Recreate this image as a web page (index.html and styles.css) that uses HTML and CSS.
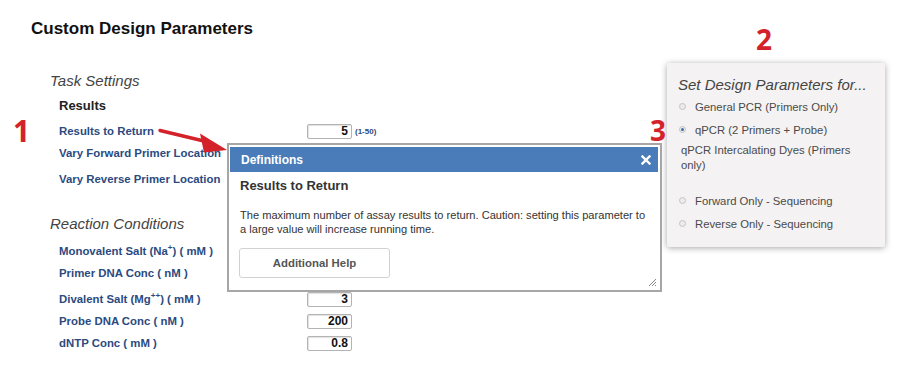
FILE: index.html
```html
<!DOCTYPE html>
<html>
<head>
<meta charset="utf-8">
<title>Custom Design Parameters</title>
<link rel="stylesheet" href="styles.css">
</head>
<body>
<div class="page">
  <div class="main">
    <h1>Custom Design Parameters</h1>

    <h2 class="sect">Task Settings</h2>
    <h3 class="sub">Results</h3>
    <div class="rows">
      <div class="row">
        <label>Results to Return</label>
        <span class="field"><input class="num" type="text" value="5"><span class="range">(1-50)</span></span>
      </div>
      <div class="row">
        <label>Vary Forward Primer Location</label>
        <span class="field"><input class="num" type="text" value=""></span>
      </div>
      <div class="row sp">
        <label>Vary Reverse Primer Location</label>
        <span class="field"><input class="num" type="text" value=""></span>
      </div>
    </div>

    <h2 class="sect sect2">Reaction Conditions</h2>
    <div class="rows rows2">
      <div class="row">
        <label>Monovalent Salt (Na<sup>+</sup>) ( mM )</label>
        <span class="field"><input class="num" type="text" value="50"></span>
      </div>
      <div class="row">
        <label>Primer DNA Conc ( nM )</label>
        <span class="field"><input class="num" type="text" value="500"></span>
      </div>
      <div class="row sp">
        <label>Divalent Salt (Mg<sup>++</sup>) ( mM )</label>
        <span class="field"><input class="num" type="text" value="3"></span>
      </div>
      <div class="row">
        <label>Probe DNA Conc ( nM )</label>
        <span class="field"><input class="num" type="text" value="200"></span>
      </div>
      <div class="row">
        <label>dNTP Conc ( mM )</label>
        <span class="field"><input class="num" type="text" value="0.8"></span>
      </div>
    </div>
  </div>

  <!-- design type chooser -->
  <div class="panel">
    <div class="panel-title">Set Design Parameters for...</div>
    <div class="opt"><span class="radio"></span>General PCR (Primers Only)</div>
    <div class="opt"><span class="radio on"></span>qPCR (2 Primers + Probe)</div>
    <div class="opt-wrap">qPCR Intercalating Dyes (Primers<br>only)</div>
    <div class="opt opt-gap"><span class="radio"></span>Forward Only - Sequencing</div>
    <div class="opt"><span class="radio"></span>Reverse Only - Sequencing</div>
  </div>
</div>

<!-- definitions popup -->
<div class="dialog">
  <div class="dlg-head">
    <span>Definitions</span>
    <svg class="dlg-close" width="10" height="10" viewBox="0 0 10 10"><path d="M1.5 1.5 L8.5 8.5 M8.5 1.5 L1.5 8.5" stroke="#fff" stroke-width="2.4" stroke-linecap="square"/></svg>
  </div>
  <div class="dlg-body">
    <div class="dlg-title">Results to Return</div>
    <p class="dlg-text">The maximum number of assay results to return. Caution: setting this parameter to<br>a large value will increase running time.</p>
    <button class="help-btn" type="button">Additional Help</button>
  </div>
  <svg class="grip" width="10" height="10" viewBox="0 0 10 10"><path d="M9 2 L2 9 M9 5 L5 9 M9 8 L8 9" stroke="#888" stroke-width="1"/></svg>
</div>

<!-- annotations -->
<span class="mark m1">1</span>
<span class="mark m2">2</span>
<span class="mark m3">3</span>
<svg class="arrow" width="915" height="369" viewBox="0 0 915 369">
  <path d="M160 130.5 L208 142" stroke="#d3222a" stroke-width="3.4" stroke-linecap="round"/>
  <polygon points="227,150 200,133.5 204,152.5" fill="#d3222a"/>
</svg>
</body>
</html>
```
FILE: styles.css
```css
body {
  margin: 0;
  background: #fff;
  color: #222;
  font-family: "Liberation Sans", Arial, sans-serif;
}

.page {
  display: flex;
  padding: 19px 0 0 31px;
}
.main {
  width: 636px;
}

h1 {
  margin: 0;
  font-size: 17px;
  line-height: 20px;
  color: #111;
}

.sect {
  margin: 33px 0 0 19px;
  font-size: 15px;
  line-height: 18px;
  font-style: italic;
  font-weight: normal;
  color: #444;
}
.sect2 {
  margin-top: 25px;
}
.sub {
  margin: 8px 0 0 28px;
  font-size: 13px;
  line-height: 16px;
  color: #222;
}

.rows {
  margin: 6px 0 0 28px;
}
.rows2 {
  margin-top: 7px;
}
.row {
  display: grid;
  grid-template-columns: 248px auto;
  align-items: center;
  height: 22px;
}
.row.sp {
  margin-top: 4px;
}
.row label {
  font-size: 11.4px;
  font-weight: bold;
  color: #2b4a80;
  white-space: nowrap;
}
.row sup {
  font-size: 8px;
  line-height: 0;
}
.field {
  display: flex;
  align-items: center;
  gap: 3px;
}
.num {
  width: 45px;
  height: 15px;
  box-sizing: border-box;
  margin: 0;
  padding: 0 3px;
  border: 1px solid #b3b3b3;
  border-radius: 2px;
  box-shadow: inset 1px 1px 1px rgba(0,0,0,.12);
  text-align: right;
  font: bold 12px "Liberation Sans", Arial, sans-serif;
  color: #111;
}
.range {
  font-size: 8px;
  font-weight: bold;
  color: #2b4a80;
}

/* right panel */
.panel {
  margin-top: 44px;
  width: 218px;
  height: 184px;
  box-sizing: border-box;
  padding: 12.5px 0 0 11px;
  background: #f4f2f2;
  border-radius: 2px;
  box-shadow: 0 1px 6px rgba(0,0,0,.35);
  color: #4a4a4a;
  font-size: 11.3px;
}
.panel-title {
  font-size: 15px;
  line-height: 18px;
  font-style: italic;
  color: #444;
  margin-bottom: 1.5px;
}
.opt {
  display: flex;
  align-items: center;
  gap: 9px;
  height: 23px;
  margin-left: 1px;
}
.opt-gap {
  margin-top: 16px;
}
.opt-wrap {
  margin: 2px 0 0 3px;
  line-height: 15px;
}
.radio {
  width: 7px;
  height: 7px;
  box-sizing: border-box;
  border: 1px solid #c4c4c4;
  border-radius: 50%;
  background: #ececec;
  position: relative;
}
.radio.on::after {
  content: "";
  position: absolute;
  left: 1px;
  top: 1px;
  width: 3px;
  height: 3px;
  border-radius: 50%;
  background: #3d6fa8;
}

/* popup */
.dialog {
  position: absolute;
  left: 227px;
  top: 143px;
  width: 435px;
  height: 149px;
  box-sizing: border-box;
  border: 2px solid #a6a6a6;
  padding: 2px 2px 2px 1px;
  background: #fff;
}
.dlg-head {
  height: 25px;
  display: flex;
  align-items: center;
  justify-content: space-between;
  padding: 0 7px 0 11px;
  background: #4a7cb9;
  color: #fff;
  font-size: 12px;
  font-weight: bold;
}
.dlg-body {
  padding: 6px 9px 0 10px;
  color: #333;
}
.dlg-title {
  font-size: 13px;
  line-height: 16px;
  font-weight: bold;
}
.dlg-text {
  margin: 14px 0 0 0;
  font-size: 11.1px;
  line-height: 14px;
  white-space: nowrap;
}
.help-btn {
  display: block;
  margin: 12px 0 0 -1px;
  width: 151px;
  height: 30px;
  border: 1px solid #d2d2d2;
  border-radius: 3px;
  background: #fff;
  color: #555;
  font: bold 11.4px "Liberation Sans", Arial, sans-serif;
}
.grip {
  position: absolute;
  right: 3px;
  bottom: 3px;
}

/* annotations */
.mark {
  position: absolute;
  font-family: "Open Sans", sans-serif;
  font-weight: 700;
  line-height: 1;
  color: #d3222a;
}
.m1 {
  left: 13px;
  top: 116px;
  font-size: 30px;
}
.m2 {
  left: 756px;
  top: 25px;
  font-size: 28px;
}
.m3 {
  left: 650px;
  top: 116px;
  font-size: 28px;
}
.arrow {
  position: absolute;
  left: 0;
  top: 0;
  pointer-events: none;
}
```
